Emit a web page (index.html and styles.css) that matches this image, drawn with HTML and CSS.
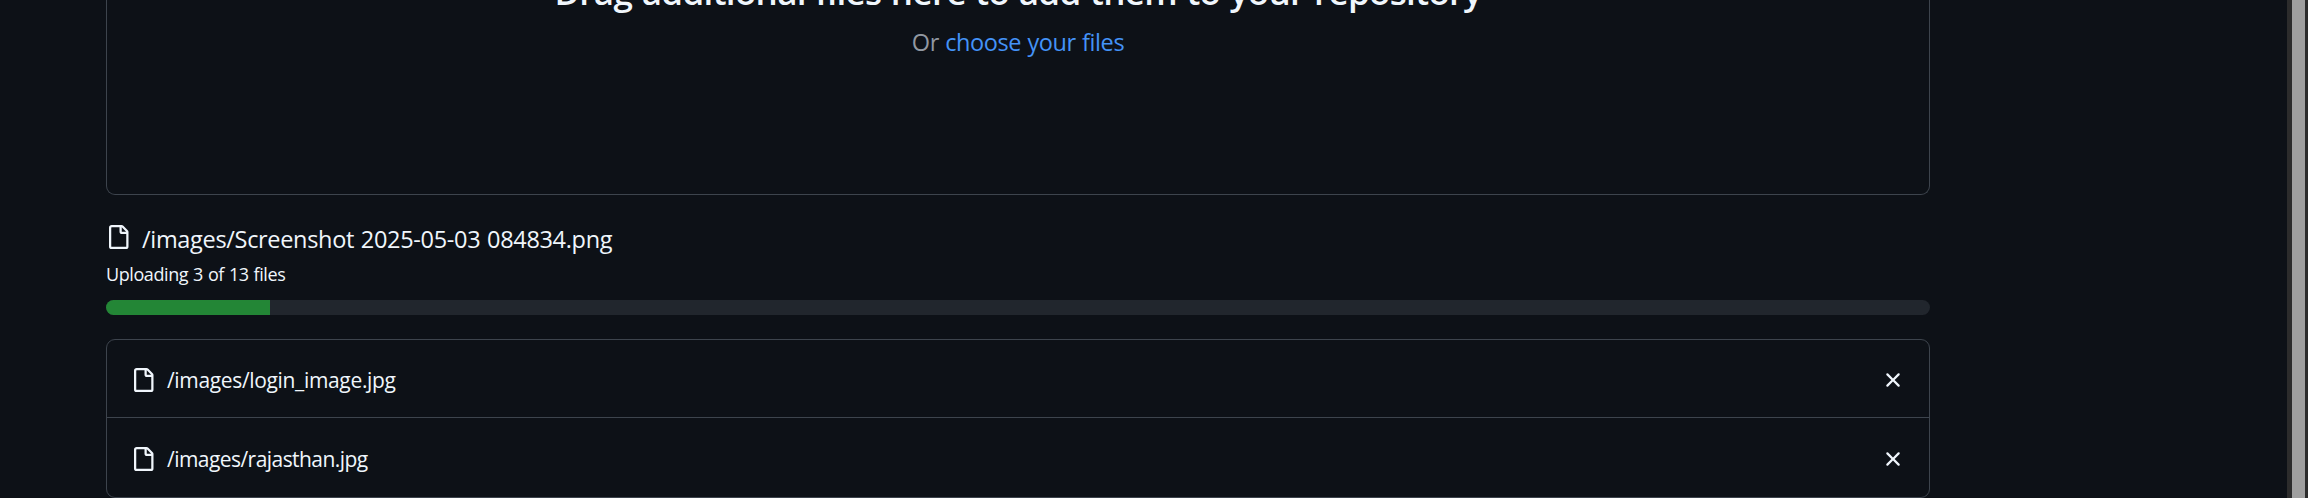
FILE: index.html
```
<!DOCTYPE html>
<html lang="en">
<head>
<meta charset="utf-8">
<title>Upload files</title>
<link rel="stylesheet" href="styles.css">
</head>
<body>
<svg class="sprite" aria-hidden="true">
  <symbol id="file" viewBox="0 0 16 16"><path d="M2 1.75C2 .784 2.784 0 3.75 0h6.586c.464 0 .909.184 1.237.513l2.914 2.914c.329.328.513.773.513 1.237v9.586A1.75 1.75 0 0 1 13.25 16h-9.5A1.75 1.75 0 0 1 2 14.25Zm1.75-.25a.25.25 0 0 0-.25.25v12.5c0 .138.112.25.25.25h9.5a.25.25 0 0 0 .25-.25V6h-2.75A1.75 1.75 0 0 1 9 4.25V1.5Zm6.75.062V4.25c0 .138.112.25.25.25h2.688l-.011-.013-2.914-2.914-.013-.011Z"/></symbol>
  <symbol id="x" viewBox="0 0 16 16"><path d="M3.72 3.72a.75.75 0 0 1 1.06 0L8 6.94l3.22-3.22a.749.749 0 0 1 1.275.326.749.749 0 0 1-.215.734L9.06 8l3.22 3.22a.749.749 0 0 1-.326 1.275.749.749 0 0 1-.734-.215L8 9.06l-3.22 3.22a.751.751 0 0 1-1.042-.018.751.751 0 0 1-.018-1.042L6.94 8 3.72 4.78a.75.75 0 0 1 0-1.06Z"/></symbol>
</svg>
<div class="page">
  <main class="content">
    <section class="dropzone">
      <h2 class="heading">Drag additional files here to add them to your repository</h2>
      <p class="choose">Or <a class="link">choose your files</a></p>
    </section>
    <section class="progress">
      <div class="current"><svg class="icon"><use href="#file"/></svg><span class="current-name">/images/Screenshot 2025-05-03 084834.png</span></div>
      <div class="status">Uploading 3 of 13 files</div>
      <div class="track"><div class="bar" style="width:9%"></div></div>
    </section>
    <ul class="files">
      <li class="file"><svg class="icon"><use href="#file"/></svg><span class="name">/images/login_image.jpg</span><svg class="icon"><use href="#x"/></svg></li>
      <li class="file file-last"><svg class="icon"><use href="#file"/></svg><span class="name">/images/rajasthan.jpg</span><svg class="icon"><use href="#x"/></svg></li>
    </ul>
  </main>
  <div class="scrollbar"><div class="thumb"></div></div>
</div>
</body>
</html>
```
FILE: styles.css
```
* { box-sizing: border-box; }
body { margin: 0; background: #0d1117; color: #f0f6fc; font-family: "Open Sans", sans-serif; overflow: hidden; }
.sprite { display: none; }
.page { display: flex; justify-content: space-between; height: 498px; overflow: hidden; }
.content { width: 1824px; margin-left: 106px; flex: none; }
.dropzone { height: 195px; border: 1px solid #3d444d; border-top: 0; border-radius: 0 0 9px 9px; text-align: center; overflow: hidden; }
.heading { margin: -35px 0 0; font-size: 35px; line-height: 54px; font-weight: 600; letter-spacing: -0.66px; word-spacing: 1px; white-space: nowrap; }
.choose { margin: 5px 0 0; font-size: 23.5px; line-height: 36px; letter-spacing: -0.4px; word-spacing: 0.6px; color: #9198a1; }
.link { color: #4493f8; }
.progress { padding-top: 25px; }
.current { display: flex; align-items: center; height: 36px; gap: 12px; font-size: 23.5px; line-height: 36px; letter-spacing: -0.32px; word-spacing: 1px; }
.current .icon { margin-bottom: 2px; }
.current-name { padding-top: 1px; }
.icon { width: 24px; height: 24px; fill: currentColor; flex: none; }
.status { margin-top: 5px; font-size: 18px; line-height: 27px; letter-spacing: -0.42px; word-spacing: 0.7px; }
.track { height: 15px; margin-top: 12px; border-radius: 9px; background: #21262d; overflow: hidden; }
.bar { height: 100%; background: #238636; }
.files { list-style: none; margin: 24px 0 0; padding: 0; border: 1px solid #3d444d; border-radius: 9px; }
.file { display: flex; align-items: center; height: 77px; padding: 3px 24px 0; font-size: 21px; line-height: 32px; letter-spacing: -0.34px; }
.file-last { border-top: 1px solid #3d444d; height: 80px; padding-top: 4px; padding-bottom: 1px; letter-spacing: -0.55px; }
.name { flex: 1; margin-left: 12px; }
.scrollbar { width: 21px; background: #2c2c2c; padding: 0 3px 0 5px; }
.thumb { height: 100%; background: #9f9f9f; }
```
